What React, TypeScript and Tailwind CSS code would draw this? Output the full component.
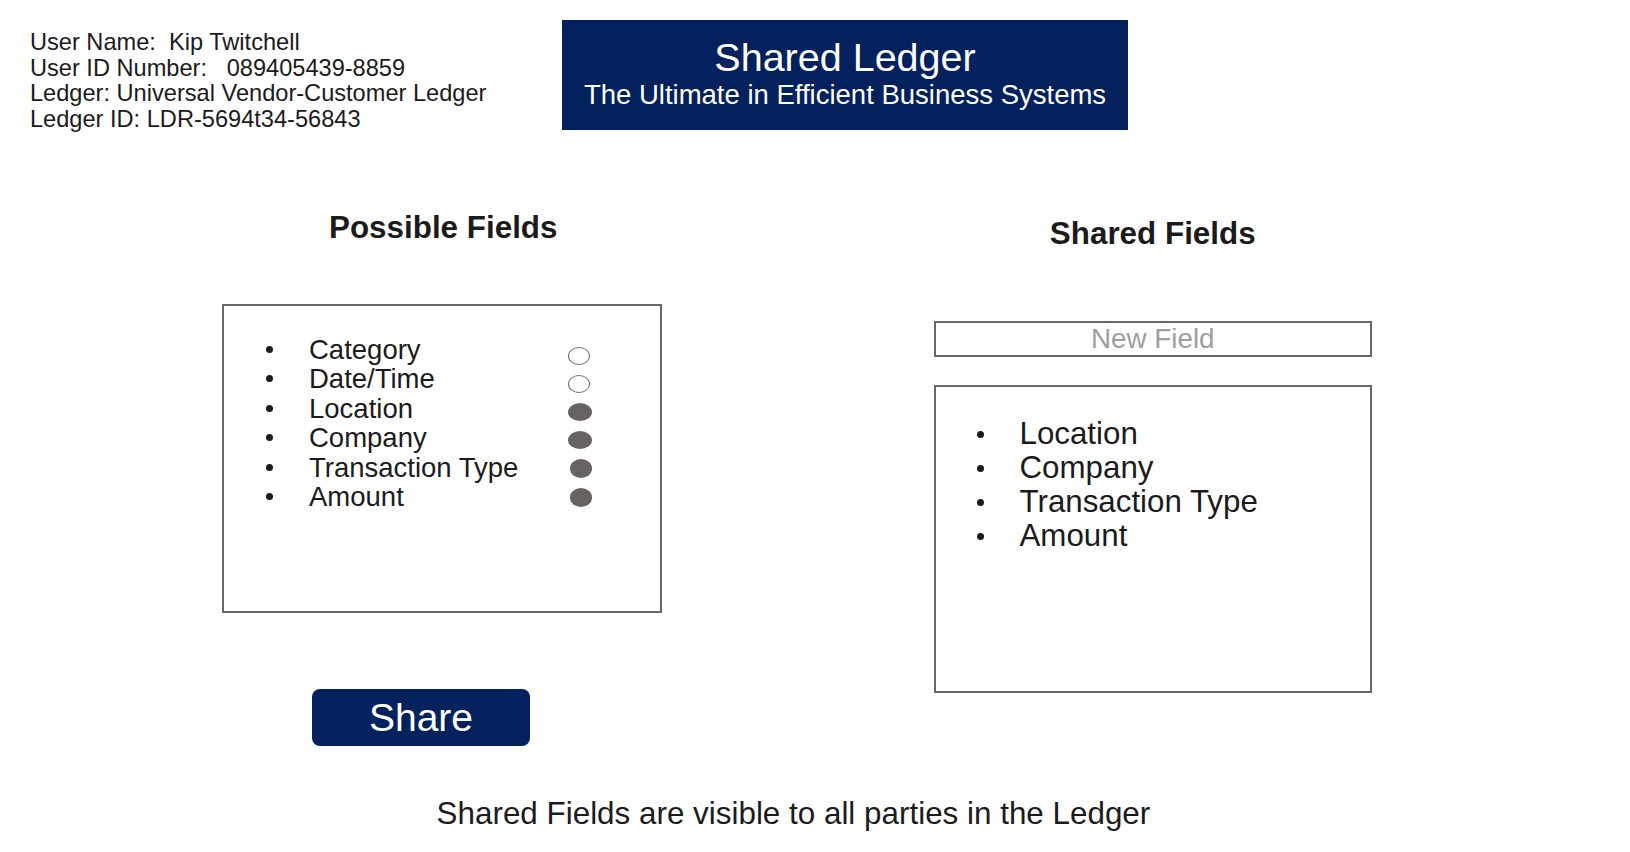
// Shared Ledger — field sharing screen

const possible = [
  { label: 'Category', dot: 'w-[22px] h-[18px] border-[1.5px] border-[#6a6767] bg-white ml-0' },
  { label: 'Date/Time', dot: 'w-[22px] h-[18px] border-[1.5px] border-[#6a6767] bg-white ml-0' },
  { label: 'Location', dot: 'w-[24px] h-[18px] bg-[#676363] ml-0' },
  { label: 'Company', dot: 'w-[24px] h-[18px] bg-[#676363] ml-0' },
  { label: 'Transaction Type', dot: 'w-[22px] h-[19px] bg-[#676363] ml-[2px]' },
  { label: 'Amount', dot: 'w-[22px] h-[19px] bg-[#676363] ml-[2px]' },
];

const shared = ['Location', 'Company', 'Transaction Type', 'Amount'];

function Bullet() {
  return <span className="w-[7px] h-[7px] rounded-full bg-[#1b1b1b] shrink-0" />;
}

export default function App() {
  return (
    <div className="w-[1630px] h-[852px] bg-white text-[#1b1b1b] font-['Liberation_Sans',Arial,sans-serif] overflow-hidden">
      {/* top row */}
      <div className="flex items-start h-[130px] pt-[20px] pl-[30px]">
        <div className="w-[532px] mt-[10px] text-[23.6px] leading-[25.6px] whitespace-pre">
          <div>User Name:  Kip Twitchell</div>
          <div>User ID Number:   089405439-8859</div>
          <div>Ledger: Universal Vendor-Customer Ledger</div>
          <div>Ledger ID: LDR-5694t34-56843</div>
        </div>
        <div className="w-[566px] h-[110px] bg-[#03215d] text-white flex flex-col items-center pt-[17px]">
          <div className="text-[39.5px] leading-[40px]">Shared Ledger</div>
          <div className="text-[27.5px] leading-[30px] mt-[3px]">The Ultimate in Efficient Business Systems</div>
        </div>
      </div>

      {/* columns */}
      <div className="flex items-start pl-[221.5px]">
        <div className="w-[440.5px] mt-[79.6px] flex flex-col">
          <h2 className="pl-[3px] text-[31.4px] leading-[36px] font-bold text-center">Possible Fields</h2>
          <div className="mt-[58px] h-[309px] border-2 border-[#6a6767] flex pl-[42px]">
            <div className="w-[302.5px] pt-[29px] flex flex-col">
              {possible.map(p => (
                <div key={p.label} className="flex items-center h-[29.5px] text-[27.5px]">
                  <Bullet />
                  <span className="ml-[36.5px]">{p.label}</span>
                </div>
              ))}
            </div>
            <div className="pt-[41px] flex flex-col gap-[10px]">
              {possible.map(p => (
                <span key={p.label} className={`rounded-[50%] block ${p.dot}`} />
              ))}
            </div>
          </div>
          <button className="mt-[76px] ml-[90.5px] w-[218px] h-[57px] rounded-[8px] bg-[#03215d] text-white text-[39px] leading-[57px]">
            Share
          </button>
        </div>

        <div className="w-[438.5px] ml-[271.5px] mt-[86px] flex flex-col">
          <h2 className="text-[31.4px] leading-[36px] font-bold text-center">Shared Fields</h2>
          <div className="mt-[69px] h-[35.5px] border-2 border-[#6a6767] flex items-center justify-center text-[27.8px] text-[#a09e9e]">
            New Field
          </div>
          <div className="mt-[28.5px] h-[308px] border-2 border-[#6a6767] pl-[41px] pt-[30px]">
            {shared.map(s => (
              <div key={s} className="flex items-center h-[34px] text-[31.3px]">
                <Bullet />
                <span className="ml-[36px]">{s}</span>
              </div>
            ))}
          </div>
        </div>
      </div>

      <p className="mt-[50px] ml-[436.6px] text-[31.4px] leading-[36px]">
        Shared Fields are visible to all parties in the Ledger
      </p>
    </div>
  );
}
